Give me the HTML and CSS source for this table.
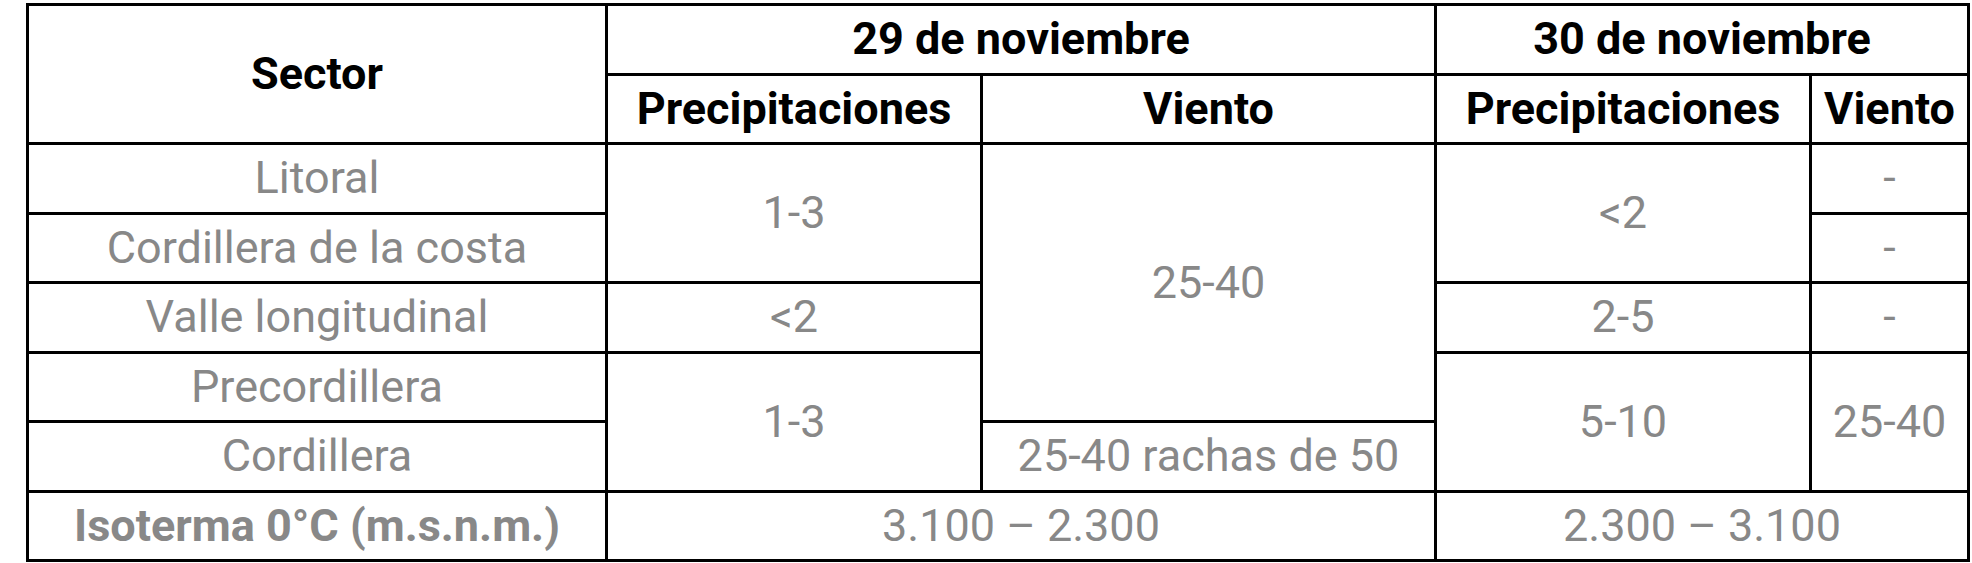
FILE: index.html
```html
<!DOCTYPE html>
<html lang="es">
<head>
<meta charset="utf-8">
<link rel="stylesheet" href="styles.css">
</head>
<body>
<div class="wrap">
<table class="pron">
  <colgroup>
    <col class="c1"><col class="c2"><col class="c3"><col class="c4"><col class="c5">
  </colgroup>
  <tr class="r">
    <th rowspan="2">Sector</th>
    <th colspan="2">29 de noviembre</th>
    <th colspan="2">30 de noviembre</th>
  </tr>
  <tr class="r">
    <th>Precipitaciones</th>
    <th>Viento</th>
    <th>Precipitaciones</th>
    <th>Viento</th>
  </tr>
  <tr class="r">
    <td>Litoral</td>
    <td rowspan="2">1-3</td>
    <td rowspan="4">25-40</td>
    <td rowspan="2">&lt;2</td>
    <td>-</td>
  </tr>
  <tr class="r">
    <td>Cordillera de la costa</td>
    <td>-</td>
  </tr>
  <tr class="r">
    <td>Valle longitudinal</td>
    <td>&lt;2</td>
    <td>2-5</td>
    <td>-</td>
  </tr>
  <tr class="r">
    <td>Precordillera</td>
    <td rowspan="2">1-3</td>
    <td rowspan="2">5-10</td>
    <td rowspan="2">25-40</td>
  </tr>
  <tr class="r">
    <td>Cordillera</td>
    <td>25-40 rachas de 50</td>
  </tr>
  <tr class="r">
    <td class="iso">Isoterma 0°C (m.s.n.m.)</td>
    <td colspan="2">3.100 – 2.300</td>
    <td colspan="2">2.300 – 3.100</td>
  </tr>
</table>
</div>
</body>
</html>
```
FILE: styles.css
```css
html, body {
  margin: 0;
  padding: 0;
  background: #ffffff;
}
.wrap {
  padding: 3px 0 0 26px;
}
.pron {
  border-collapse: collapse;
  table-layout: fixed;
  width: 1941px;
  font-family: Roboto, "Liberation Sans", sans-serif;
  font-size: 45px;
  line-height: 1.15;
  border: 3px solid #000;
}
.c1 { width: 579px; }
.c2 { width: 375px; }
.c3 { width: 454px; }
.c4 { width: 375px; }
.c5 { width: 158px; }
.r { height: 69.5px; }
.pron th, .pron td {
  border: 3px solid #000;
  padding: 0;
  text-align: center;
  vertical-align: middle;
  white-space: nowrap;
}
.pron th {
  color: #000;
  font-weight: 700;
}
.pron td {
  color: #888888;
  font-weight: 400;
}
.pron td.iso {
  font-weight: 700;
}
```
